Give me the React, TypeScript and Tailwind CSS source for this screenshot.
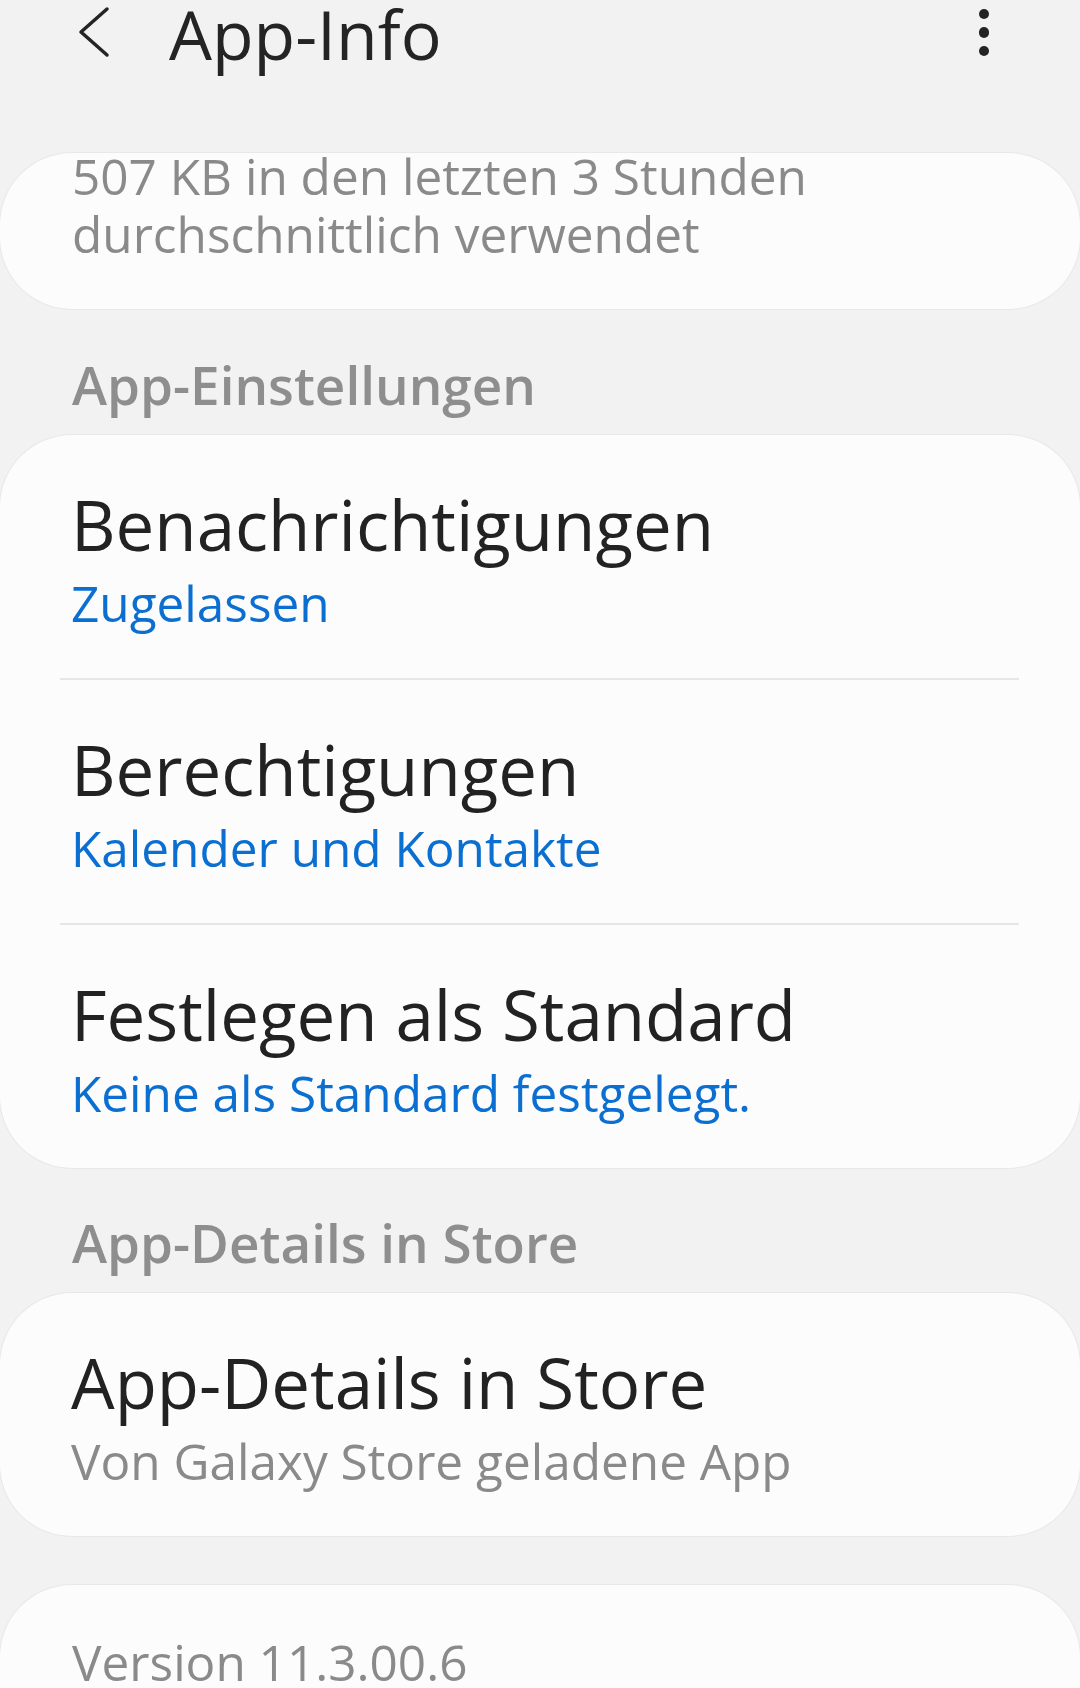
type Item = {
  title: string;
  sub: string;
  tone: "blue" | "gray";
};

const SETTINGS: Item[] = [
  { title: "Benachrichtigungen", sub: "Zugelassen", tone: "blue" },
  { title: "Berechtigungen", sub: "Kalender und Kontakte", tone: "blue" },
  {
    title: "Festlegen als Standard",
    sub: "Keine als Standard festgelegt.",
    tone: "blue",
  },
];

export default function App() {
  return (
    <div className="min-h-[1688px] w-full overflow-hidden bg-[#f2f2f2] font-['Open_Sans',sans-serif] text-[#242424]">
      {/* Header */}
      <header className="flex h-[68px] items-center">
        <button className="ml-[78px] mt-[-4px] flex h-[52px] w-[32px] items-center justify-center">
          <svg width="32" height="52" viewBox="0 0 32 52" fill="none">
            <path
              d="M29 3 L3 26 L29 49"
              stroke="#242424"
              strokeWidth="3.5"
              strokeLinecap="round"
              strokeLinejoin="round"
            />
          </svg>
        </button>
        <h1 className="ml-[59px] text-[68px] leading-[80px] font-normal">App-Info</h1>
        <div className="ml-auto mr-[91px] mt-[-3px] flex flex-col items-center gap-[8px]">
          <span className="h-[10.5px] w-[10.5px] rounded-full bg-[#242424]" />
          <span className="h-[10.5px] w-[10.5px] rounded-full bg-[#242424]" />
          <span className="h-[10.5px] w-[10.5px] rounded-full bg-[#242424]" />
        </div>
      </header>

      {/* Data usage card */}
      <section className="mt-[85px] flow-root rounded-[72px] bg-[#fcfcfc] pb-[46px] pl-[72px] shadow-[0_0_0_1px_#e8e8e8]">
        <p className="mt-[-6px] text-[49.5px] leading-[58px] text-[#8a8a8a]">
          507 KB in den letzten 3 Stunden
          <br />
          durchschnittlich verwendet
        </p>
      </section>

      <SectionTitle className="mt-[46px]">App-Einstellungen</SectionTitle>

      <section className="mt-[20px] rounded-[72px] bg-[#fcfcfc] shadow-[0_0_0_1px_#e8e8e8]">
        {SETTINGS.map((item, i) => (
          <div key={item.title}>
            {i > 0 && <div className="ml-[60px] mr-[61px] h-[2px] bg-[#e6e6e6]" />}
            <Row item={item} />
          </div>
        ))}
      </section>

      <SectionTitle className="mt-[45px]">App-Details in Store</SectionTitle>

      <section className="mt-[20px] rounded-[72px] bg-[#fcfcfc] shadow-[0_0_0_1px_#e8e8e8]">
        <Row
          item={{
            title: "App-Details in Store",
            sub: "Von Galaxy Store geladene App",
            tone: "gray",
          }}
        />
      </section>

      <section className="mt-[49px] h-[200px] rounded-[72px] bg-[#fcfcfc] pl-[72px] pt-[48px] shadow-[0_0_0_1px_#e8e8e8]">
        <p className="text-[49.5px] leading-[58px] text-[#8a8a8a]">Version 11.3.00.6</p>
      </section>
    </div>
  );
}

function SectionTitle({
  children,
  className,
}: {
  children: React.ReactNode;
  className?: string;
}) {
  return (
    <h2
      className={
        "pl-[72px] text-[53px] leading-[60px] font-semibold text-[#8e8e8e] " +
        (className ?? "")
      }
    >
      {children}
    </h2>
  );
}

function Row({ item }: { item: Item }) {
  return (
    <div className="pb-[46px] pl-[71px] pt-[49px]">
      <p className="text-[69px] leading-[80px] text-[#222222]">{item.title}</p>
      <p
        className={
          item.tone === "blue"
            ? "mt-[10px] text-[49.5px] leading-[58px] text-[#0b6fd1]"
            : "mt-[10px] text-[49.5px] leading-[58px] text-[#8a8a8a]"
        }
      >
        {item.sub}
      </p>
    </div>
  );
}
